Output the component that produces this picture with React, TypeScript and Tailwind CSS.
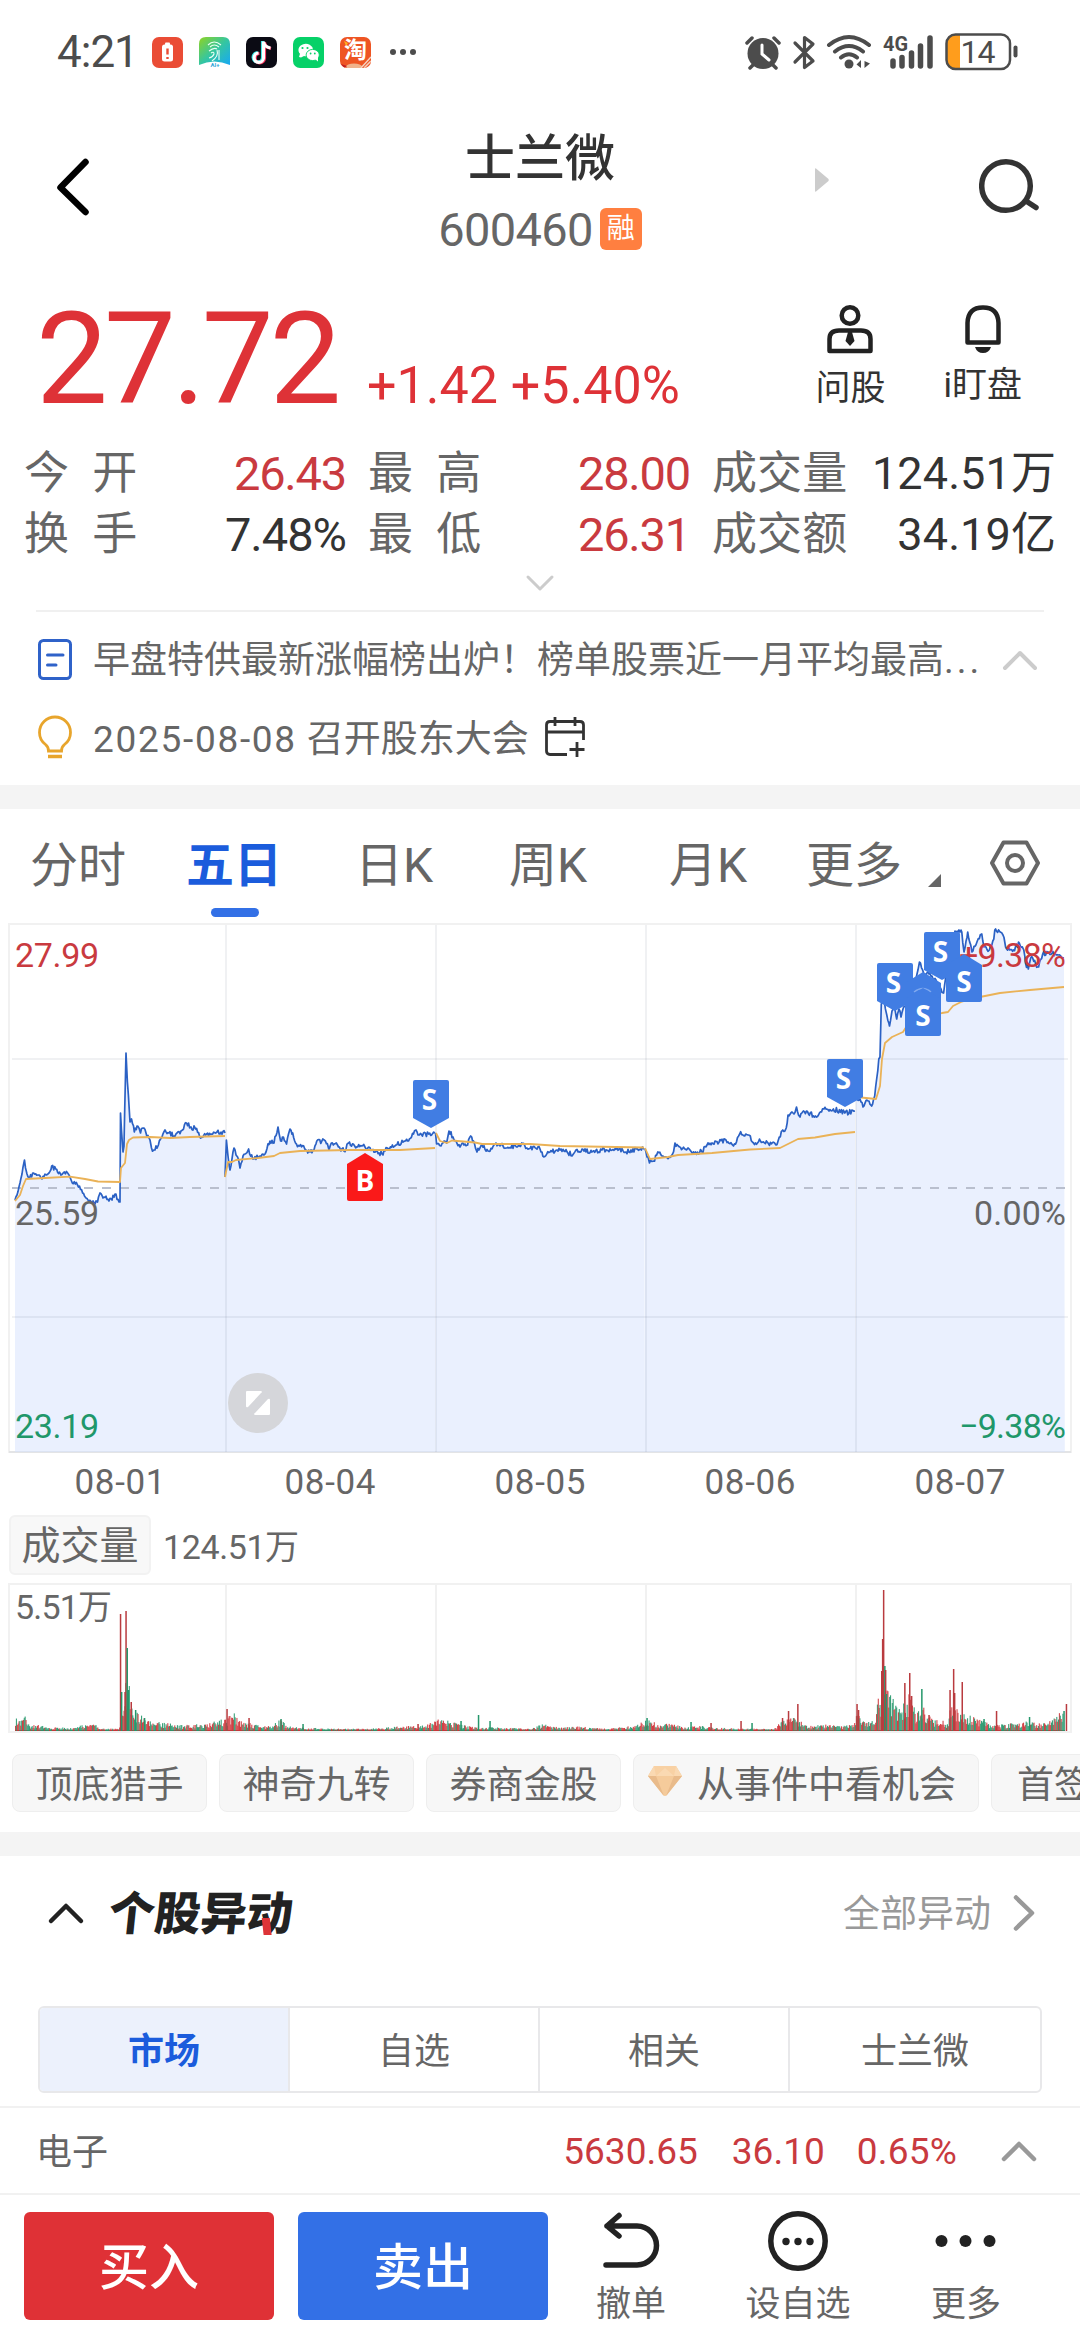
import type { ReactNode } from "react";

type Point = [number, number];

// Anchor points of the price line, one list per trading day.
const priceDays: Point[][] = [
  [
    [15, 1201], [17, 1196], [20, 1184], [22, 1175], [24.5, 1161], [27, 1175], [29.6, 1179], [32.7, 1174], [38, 1176],
    [42, 1180], [46.5, 1176], [49, 1174], [51.7, 1167], [55.8, 1170], [57.5, 1173], [61, 1176], [64.4, 1173],
    [69, 1176], [72.3, 1184], [77.5, 1186], [82.6, 1194], [86, 1199], [93, 1202], [97.5, 1203], [100, 1194],
    [104, 1198], [109, 1202], [115, 1195], [120, 1203], [120.5, 1114], [123, 1153], [124, 1147], [124.6, 1116],
    [126, 1054], [127.4, 1083], [130, 1123], [131.5, 1120], [134.3, 1133], [137, 1127], [140.5, 1134], [143, 1129],
    [146, 1134], [150, 1141], [151.5, 1149], [154, 1151], [158.4, 1146], [162, 1138], [165, 1131], [169, 1134],
    [174, 1137], [177, 1134], [182.5, 1131], [186.6, 1124], [191, 1128], [195.6, 1130], [199.7, 1138],
    [206.6, 1135], [217, 1133], [225, 1134],
  ],
  [
    [225, 1178], [226.4, 1141], [228, 1157], [230, 1171], [234, 1149], [237.6, 1158], [240, 1169], [243, 1157],
    [245, 1155], [248.6, 1150], [250.7, 1157], [254, 1160], [260, 1157], [265, 1155], [270, 1142], [274, 1144],
    [278, 1128], [280.6, 1142], [282.4, 1138], [286.5, 1145], [290, 1130], [292.7, 1134], [295.5, 1144],
    [299.6, 1147], [304.8, 1150], [310, 1153], [314, 1151], [316.8, 1142], [325.4, 1142], [329, 1151],
    [331.3, 1144], [337.5, 1146], [341, 1152], [346, 1150], [348.5, 1144], [354.7, 1147], [365, 1148], [372, 1151],
    [379, 1154], [382, 1155], [387.4, 1149], [396, 1146], [404.6, 1142], [411.5, 1138], [416, 1131], [419.4, 1136],
    [428.7, 1135], [435, 1134],
  ],
  [
    [435.5, 1134], [436.6, 1145], [441, 1147], [444, 1142], [446.6, 1144], [449, 1132], [453, 1138], [456, 1142],
    [460, 1148], [465, 1145], [467.6, 1146], [470.7, 1137], [473.5, 1142], [477, 1153], [482, 1146], [488, 1152],
    [496, 1144], [503, 1147], [516.5, 1148], [521.7, 1144], [527, 1149], [540, 1150], [542.8, 1157], [550, 1153],
    [557, 1151], [564, 1152], [572.7, 1156], [576, 1151], [591.7, 1153], [602, 1151], [619, 1150], [626, 1153],
    [636.4, 1150], [644.3, 1150],
  ],
  [
    [645, 1150], [646, 1153], [649.5, 1164], [653.6, 1162], [657.8, 1153], [662, 1157], [669, 1158], [672.6, 1155],
    [675, 1144], [679.5, 1148], [688, 1149], [691.5, 1153], [702, 1153], [707, 1146], [712, 1144], [726, 1141],
    [733.5, 1147], [739.7, 1135], [748.3, 1136], [753.5, 1144], [760.4, 1142], [776, 1146], [779.3, 1138],
    [782.8, 1131], [786.2, 1129], [788, 1116], [794, 1115], [796.5, 1108], [800, 1118], [803.4, 1112],
    [815.5, 1117], [824, 1110], [829, 1112], [833.4, 1110], [844.8, 1114], [855, 1112],
  ],
  [
    [856, 1099], [860, 1100], [863, 1108], [867, 1101], [871.6, 1107], [874.7, 1097], [876.8, 1079], [878.8, 1060],
    [880, 1058], [881.3, 1005], [884.4, 1003], [886.8, 1016], [889.5, 1027], [892, 1012], [894, 1005], [896.7, 1020],
    [899, 1010], [901, 1018], [903.3, 1009], [912, 994], [917, 975], [919.5, 963], [924, 975], [929, 975], [936, 981],
    [943.6, 994], [945.6, 979], [949.8, 957], [955, 932], [961.8, 933], [964, 953], [967.7, 933], [972, 953],
    [977.3, 942], [981.8, 935], [984, 948], [989.4, 951], [992.8, 942], [995.6, 930], [1003, 936], [1005.6, 948],
    [1013.5, 951], [1019.3, 944], [1023.8, 951], [1025.5, 964], [1028.3, 970], [1030.7, 959], [1038.6, 968],
    [1042.7, 955], [1048, 953], [1056.5, 956], [1064, 959],
  ],
];

const averageDays = [
  "15,1202 20,1196 23,1187 26,1180 45,1179 70,1177.6 85,1180 98,1182.5 120,1183 121,1169 125,1164 127,1145 129,1141 133,1138.5 150,1138 170,1139 190,1138 225,1137",
  "225,1178 228,1163 232,1163 236,1161 258,1159 274,1157 280,1154 300,1152 350,1151 400,1151 435,1149",
  "436,1134 440,1142 447,1144 452,1141.5 475,1143.5 482,1145 530,1145 560,1147 644,1148.5",
  "645,1149 650,1160 668,1158 678,1156 712,1154 750,1150.5 780,1149 788,1145 798,1140 815,1138.5 835,1135 855,1133",
  "861,1098.5 876,1100 880,1087 882,1060 885,1044 892,1038 903,1033 910,1022 925,1016 942,1014 948,1013 953,1007 961,1003 975,999 1000,994 1030,991 1064,988",
];

// Upper bound of ordinary volume along the time axis.
const volumeEnvelope: Point[] = [
  [15, 11], [20, 8], [24, 13], [30, 5], [42, 5], [52, 3], [70, 3], [80, 5], [93, 6], [102, 2], [119, 2], [120, 16],
  [127, 48], [132, 26], [140, 14], [150, 9], [165, 7], [180, 5], [205, 6], [222, 10], [226, 12], [231, 17],
  [240, 10], [254, 6], [270, 4], [280, 11], [286, 4], [304, 3], [330, 2], [370, 2], [400, 4], [425, 5], [437, 10],
  [446, 9], [460, 6], [470, 4], [500, 3], [530, 2], [542, 6], [560, 3], [580, 4], [605, 2], [635, 5], [645, 9],
  [648, 10], [658, 6], [676, 6], [684, 3], [700, 5], [712, 3], [740, 2], [774, 2], [780, 8], [790, 12], [799, 10],
  [808, 4], [825, 6], [840, 4], [853, 7], [857, 16], [862, 10], [870, 7], [875, 12], [878, 30], [886, 36],
  [893, 30], [901, 20], [908, 33], [911, 30], [916, 12], [921, 28], [925, 14], [934, 10], [943, 9], [946, 4],
  [950, 22], [955, 22], [960, 15], [970, 13], [980, 10], [990, 6], [1001, 6], [1020, 7], [1030, 9], [1040, 6],
  [1050, 9], [1060, 16], [1064, 18],
];

// Single minutes that stand out: x, height, rising?
const volumeSpikes: [number, number, boolean][] = [
  [120.5, 117, true], [121.6, 39, false], [125, 39, true], [126, 120, true], [127.2, 83, false], [128.4, 41, false],
  [131.2, 29, true], [135.6, 21, false], [144.5, 13, false], [227, 22, true], [249, 13, true], [281, 12, false],
  [303, 7, false], [418, 7, true], [461, 10, false], [478.5, 16, false], [490, 10, false], [647, 13, false],
  [691, 9, false], [711, 8, true], [741, 10, true], [752, 8, false], [782.5, 13, true], [788.5, 20, true],
  [797.8, 27, true], [857, 27, true], [858.5, 21, true], [881.7, 60, true], [882.6, 92, true], [883.6, 141, true],
  [884.8, 65, false], [885.6, 61, true], [886.5, 37, false], [904.8, 48, true], [909.7, 58, true], [911.6, 35, true],
  [921.8, 42, false], [929, 16, true], [950, 41, true], [953.6, 62, true], [954.6, 38, true], [962.2, 49, true],
  [984, 12, false], [996.5, 20, true], [1029.5, 14, false], [1064, 20, false], [1066.4, 27, true],
];

const noise = (seed: number) => {
  const v = Math.sin(seed * 127.1 + 11.7) * 43758.5453;
  return v - Math.floor(v);
};

const interpolate = (points: Point[], x: number) => {
  const next = points.findIndex((p) => p[0] >= x);
  if (next <= 0) return points[0][1];
  const [x0, y0] = points[next - 1];
  const [x1, y1] = points[next];
  return y0 + ((y1 - y0) * (x - x0)) / (x1 - x0);
};

const roughen = (points: Point[]) => {
  const result: Point[] = [];
  points.forEach(([x, y], i) => {
    result.push([x, y]);
    const after = points[i + 1];
    if (!after) return;
    for (let px = x + 1; px < after[0] - 0.6; px += 1) {
      const jitter = (noise(px) - 0.5) * 5;
      result.push([px, interpolate([[x, y], after], px) + jitter]);
    }
  });
  return result;
};

const toPoints = (points: Point[]) => points.map(([x, y]) => `${x.toFixed(1)},${y.toFixed(1)}`).join(" ");

const priceLines = priceDays.map(roughen);

const bars = Array.from({ length: 1198 }, (_, i) => {
  const x = 15 + i * 0.875;
  const h = Math.max(1.5, interpolate(volumeEnvelope, x) * (0.4 + 0.8 * noise(i + 3)));
  return { x, h, up: noise(Math.floor(i / 4) + i * 0.31) > 0.48 };
});

const gridX = [226, 436, 646, 856];

const Chevron = ({ d, className }: { d: string; className: string }) => (
  <svg viewBox="0 0 40 40" fill="none" stroke="currentColor" strokeLinecap="round" strokeLinejoin="round" className={className}>
    <path d={d} />
  </svg>
);

const UP = "M5 28 L20 13 L35 28";

const Marker = ({ x, y, up, label }: { x: number; y: number; up?: boolean; label?: string }) => (
  <g transform={`translate(${x} ${y})`}>
    <path
      d={up ? "M0 11 L18 0 L36 11 V46 Q36 48 34 48 H2 Q0 48 0 46Z" : "M2 0 H34 Q36 0 36 2 V38 L18 48 L0 38 V2 Q0 0 2 0Z"}
      fill={label === "B" ? "#fa1919" : "#417de3"}
    />
    {label && (
      <text x={up ? 18 : 16.5} y={up ? 38 : 30} textAnchor="middle" fill="#fff" fontSize="28" className="font-['Open_Sans'] font-bold">
        {label}
      </text>
    )}
  </g>
);

const StatusBar = () => (
  <div className="flex h-[104px] items-center pl-[57px] pr-[60px] text-[#4c4c4c]">
    <span className="w-[95px] text-[44px] leading-none tracking-[-1px]">4:21</span>
    <div className="flex items-center gap-4">
      <svg viewBox="0 0 31 31" className="size-[31px]">
        <rect width="31" height="31" rx="7" fill="#ea4c35" />
        <rect x="10" y="7.500" width="11" height="17" rx="2.500" fill="#fff" />
        <rect x="13" y="5.500" width="5" height="3" rx="1" fill="#fff" />
        <path d="M15.500 11.500v6M15.500 20v2" stroke="#ea4c35" strokeWidth="2.400" />
      </svg>
      <svg viewBox="0 0 31 31" className="size-[31px]">
        <defs>
          <linearGradient id="home" x1="0" y1="0" x2="1" y2="1">
            <stop offset="0" stopColor="#8fd322" />
            <stop offset="0.5" stopColor="#35c6a0" />
            <stop offset="1" stopColor="#17a8f5" />
          </linearGradient>
        </defs>
        <path d="M7 0H24Q31 0 31 7V28Q15 21 0 28V7Q0 0 7 0Z" fill="url(#home)" />
        <g fill="none" stroke="#e9fff4" strokeWidth="1.100">
          <path d="M9 8Q15 2 22 8M11 10Q15 6 20 10M10 14Q15 10 18 12M18 13Q20 19 13 24M12 16Q15 14 15 17Q14 20 10 21M20 13V23" />
        </g>
        <text x="16" y="30" textAnchor="middle" fontSize="6" fill="#31a6d8" className="font-bold">AI+</text>
      </svg>
      <svg viewBox="0 0 31 31" className="size-[31px]">
        <rect width="31" height="31" rx="7" fill="#0b0b14" />
        <g fill="none" strokeWidth="3.200">
          <path d="M16.500 4V20.500A4.700 4.700 0 1 1 11.500 15.500M16.500 4.500Q17.500 9.500 23.500 10.500" stroke="#35e6e6" />
          <path d="M18.500 5V21.500A4.700 4.700 0 1 1 13.500 16.500M18.500 5.500Q19.500 10.500 25 11.500" stroke="#f5305a" />
          <path d="M17.500 4.500V21A4.700 4.700 0 1 1 12.500 16M17.500 5Q18.500 10 24.500 11" stroke="#fff" />
        </g>
      </svg>
      <svg viewBox="0 0 31 31" className="size-[31px]">
        <rect width="31" height="31" rx="7" fill="#06d168" />
        <path d="M6 20L7 16.800A7.300 6.200 0 1 1 11 19L8 20.500Z" fill="#fff" />
        <ellipse cx="19.700" cy="18" rx="6.600" ry="5.600" fill="#fff" stroke="#06d168" strokeWidth="0.900" />
        <path d="M22 22L25 24.500L25 20Z" fill="#fff" />
        <g fill="#06d168">
          <circle cx="9.500" cy="11" r="1.100" />
          <circle cx="14.500" cy="11" r="1.100" />
          <circle cx="17.600" cy="16.500" r="0.900" />
          <circle cx="21.800" cy="16.500" r="0.900" />
        </g>
      </svg>
      <div className="relative flex size-[31px] items-center justify-center overflow-hidden rounded-[7px] bg-[#ee5523]">
        <span className="pb-1 text-[23px] font-bold leading-none text-white">淘</span>
        <svg viewBox="0 0 31 31" className="absolute inset-0">
          <path d="M4 4L8 6L6 9Z" fill="#ffb020" />
          <ellipse cx="14" cy="29.500" rx="8" ry="3" fill="#f0b38c" />
          <path d="M1 27L7 29L4 31Z" fill="#c02020" />
          <path d="M21 31L31 20M24 31L31 24" stroke="#f6d2c0" strokeWidth="1.500" />
        </svg>
      </div>
    </div>
    <div className="ml-[19px] flex gap-1">
      <i className="size-1.5 rounded-full bg-[#4c4c4c]" />
      <i className="size-1.5 rounded-full bg-[#4c4c4c]" />
      <i className="size-1.5 rounded-full bg-[#4c4c4c]" />
    </div>
    <svg viewBox="744 32 276 38" className="ml-auto h-[38px] w-[276px]" fill="none" stroke="#4c4c4c">
      <circle cx="763" cy="52.500" r="15.500" fill="#4c4c4c" stroke="none" />
      <path d="M762 44V53L769 59" stroke="#fff" strokeWidth="3" strokeLinecap="round" />
      <path d="M747 42L752 37M774 37L779 42M754 63L750 67M772 63L776 67" strokeWidth="3.500" strokeLinecap="round" />
      <path d="M795 42L813 60L804.500 66.500V36.500L813 43L795 61" strokeWidth="3.200" strokeLinecap="round" strokeLinejoin="round" />
      <path d="M829 44Q849 28 869 44M835 50.500Q849 39.500 863 50.500M841 56.500Q849 50 857 56.500" strokeWidth="4" strokeLinecap="round" />
      <circle cx="849" cy="63" r="4.500" fill="#4c4c4c" stroke="none" />
      <path d="M861 59V67L856.500 63.500ZM864.500 59V67M864.500 67V60L870 62.500Z" fill="#4c4c4c" stroke="none" />
      <text x="883" y="49.500" fontSize="20" fill="#4c4c4c" stroke="none" textLength="25" lengthAdjust="spacingAndGlyphs" className="font-bold">4G</text>
      <path d="M893 60V65M902 56.500V65M911.500 52V65M920.500 45V65M930 37V65" strokeWidth="5.500" strokeLinecap="round" />
      <path d="M953 34H960V68H953Q947 68 947 60V42Q947 34 953 34Z" fill="#ff9d1c" stroke="none" />
      <rect x="946.500" y="33.500" width="63.500" height="34.500" rx="9" strokeWidth="2.500" />
      <path d="M1015.500 46.500V54.500" strokeWidth="4" strokeLinecap="round" />
      <text x="960.500" y="61.500" fontSize="32" fill="#4c4c4c" stroke="none" textLength="35">14</text>
    </svg>
  </div>
);

const Header = () => (
  <div className="grid h-[166px] grid-cols-[1fr_auto_1fr]">
    <svg viewBox="0 0 32 58" className="ml-[57px] mt-[54px] h-[58px] w-8" fill="none" stroke="#000" strokeWidth="6.500" strokeLinecap="round" strokeLinejoin="round">
      <path d="M28.500 4L3.500 29.500L28.500 54" />
    </svg>
    <div className="flex flex-col items-center pt-[29px]">
      <h1 className="text-[50px] font-medium leading-[52px] text-[#333]">士兰微</h1>
      <div className="mt-[19px] flex items-center gap-[7px]">
        <span className="pt-0.5 text-[47px] leading-[48px] tracking-[-0.700px] text-[#666]">600460</span>
        <span className="flex size-[42px] items-center justify-center rounded-md bg-[#ff7f40] text-[28px] leading-none text-white">融</span>
      </div>
    </div>
    <div className="flex justify-between pl-[173px] pr-[40px]">
      <svg viewBox="0 0 14 24" className="mt-16 h-6 w-3.5">
        <path d="M0 1Q0 0 1 0.500L13.500 11Q14 12 13.500 13L1 23.500Q0 24 0 23Z" fill="#ccc" />
      </svg>
      <svg viewBox="0 0 61 56" className="mt-[54px] h-14 w-[61px]" fill="none" stroke="#333" strokeWidth="5.500" strokeLinecap="round">
        <circle cx="27" cy="28" r="24.300" />
        <path d="M47 43L57 49.500" />
      </svg>
    </div>
  </div>
);

const Price = () => (
  <div className="flex h-[171px] pl-[36px] pr-[58px] text-[#de3237]">
    <div className="flex flex-1 items-baseline">
      <span className="w-[331px] text-[128px] leading-[178px] tracking-[-4px]">27.72</span>
      <span className="text-[52px]">+1.42 +5.40%</span>
    </div>
    <div className="flex gap-[58px] pt-[34px] text-[35px] leading-none text-[#333]">
      <div className="flex flex-col items-center">
        <svg viewBox="0 0 46 50" className="h-[50px] w-[46px]" fill="none" stroke="#222" strokeWidth="4.500" strokeLinejoin="round">
          <circle cx="23" cy="11.500" r="8.300" />
          <path d="M2.500 47V35Q2.500 26.500 12 26.500H34Q43.500 26.500 43.500 35V47Z" />
          <path d="M21 28H25L27.500 37L23 42L18.500 37Z" fill="#222" stroke="none" />
        </svg>
        <span className="mt-[17px]">问股</span>
      </div>
      <div className="flex flex-col items-center">
        <svg viewBox="0 0 38 50" className="h-[50px] w-[38px]" fill="none" stroke="#222" strokeWidth="4.500" strokeLinejoin="round">
          <path d="M3.500 38.500V19Q4 3.500 19 3.500Q34 3.500 34.500 19V38.500Z" />
          <path d="M11 43H27Q25 49 19 49Q13 49 11 43Z" fill="#222" stroke="none" />
        </svg>
        <span className="mt-[14px]">i盯盘</span>
      </div>
    </div>
  </div>
);

const Stat = ({ label, value, tone }: { label: string; value: string; tone: string }) => (
  <div className="flex items-center justify-between pt-[3px]">
    <span className="whitespace-pre text-[#666]">{label}</span>
    <span className={tone}>{value}</span>
  </div>
);

const Stats = () => (
  <div className="grid grid-cols-[322px_322px_344px] grid-rows-[61px_61px] gap-x-[22px] pl-6 text-[45px] leading-none tracking-[0.100px]">
    <Stat label={"今\u2002开"} value="26.43" tone="text-[47px] tracking-[-1.200px] text-[#c93a3f]" />
    <Stat label={"最\u2002高"} value="28.00" tone="text-[47px] tracking-[-1.200px] text-[#c93a3f]" />
    <Stat label="成交量" value="124.51万" tone="text-[#333]" />
    <Stat label={"换\u2002手"} value="7.48%" tone="text-[47px] tracking-[-1px] text-[#333]" />
    <Stat label={"最\u2002低"} value="26.31" tone="text-[47px] tracking-[-1.200px] text-[#c93a3f]" />
    <Stat label="成交额" value="34.19亿" tone="text-[#333]" />
  </div>
);

const News = () => (
  <div className="mx-9 h-[175px] border-t-2 border-[#f0f0f0] text-[37px] leading-none text-[#666]">
    <div className="mt-[22px] flex h-[52px] items-center">
      <svg viewBox="0 0 38 44" className="h-11 w-[38px]" fill="none" stroke="#2f62c9" strokeWidth="3" strokeLinecap="round">
        <rect x="3.500" y="2.500" width="31" height="38" rx="4" />
        <path d="M11.500 17H27M11.500 27H20" />
      </svg>
      <span className="ml-[19px] w-[891px] whitespace-nowrap">
        早盘特供最新涨幅榜出炉！榜单股票近一月平均最高<span className="tracking-[3px]">...</span>
      </span>
      <Chevron d={UP} className="ml-4 size-10 stroke-[4] text-[#ccc]" />
    </div>
    <div className="mt-[27px] flex h-[52px] items-center">
      <svg viewBox="0 0 38 44" className="-mt-1 h-11 w-[38px]" fill="none" stroke="#e8a52c" strokeWidth="2.800">
        <path d="M12.500 36Q12.500 32 9.500 29.500Q3.500 25 3.500 17.500A15.500 15.500 0 0 1 34.500 17.500Q34.500 25 28.500 29.500Q25.500 32 25.500 36Z" />
        <path d="M12 41.500H26" strokeWidth="3.500" />
      </svg>
      <span className="ml-[19px] tracking-[1.700px]">2025-08-08</span>
      <span className="ml-2.5">召开股东大会</span>
      <svg viewBox="0 0 42 42" className="-mt-1 ml-[15px] size-[42px]" fill="none" stroke="#333" strokeWidth="2.800">
        <path d="M23 38.500H6Q2.500 38.500 2.500 35V9Q2.500 5.500 6 5.500H36Q39.500 5.500 39.500 9V24M2.500 16H39.500M11 1V10M31 1V10M33 26V41M25.500 33.500H40.500" />
      </svg>
    </div>
  </div>
);

const Tabs = () => (
  <div className="flex h-[114px] pl-[30px] text-[48px] leading-[114px] text-[#666]">
    <span className="w-[156px]">分时</span>
    <div className="flex w-[169px] flex-col items-start">
      <span className="h-[99px] font-bold text-[#1b5cdc]">五日</span>
      <i className="ml-[25px] h-[9px] w-12 rounded-full bg-[#3370e6]" />
    </div>
    <span className="w-[154px]">日K</span>
    <span className="w-[160px]">周K</span>
    <span className="w-[137px]">月K</span>
    <span className="w-[122px]">更多</span>
    <svg viewBox="0 0 13 13" className="mt-[65px] size-[13px]">
      <path d="M13 0V13H0Z" fill="#666" />
    </svg>
    <svg viewBox="0 0 52 46" className="ml-[48px] mt-[31px] h-[46px] w-[52px]" fill="none" stroke="#666" strokeWidth="4">
      <path d="M14.500 2.500H37.500L49 23L37.500 43.500H14.500L3 23Z" strokeLinejoin="round" />
      <circle cx="26" cy="23" r="8" />
    </svg>
  </div>
);

const PriceChart = () => (
  <svg viewBox="8 924 1064 580" className="ml-2 block h-[580px] w-[1064px]" fontSize="34">
    <rect x="9" y="925" width="1062" height="528" fill="none" stroke="#f1f1f1" strokeWidth="2" />
    {priceLines.map((line, i) => (
      <polygon key={i} points={`${line[0][0]},1453 ${toPoints(line)} ${i < 4 ? priceLines[i + 1][0][0] : 1064.800},1453`} fill="#eaf0fe" />
    ))}
    <g stroke="#5a6478" strokeOpacity="0.090" strokeWidth="2">
      {gridX.map((x) => (
        <path key={x} d={`M${x} 926V1453`} />
      ))}
      <path d="M12 1060H1068M12 1318H1068M9 1453H1071" />
    </g>
    <path d="M12 1189H1065" stroke="#b9bfce" strokeWidth="2" strokeDasharray="9 9" />
    <g fill="none" strokeLinejoin="round">
      {priceLines.map((line, i) => (
        <polyline key={i} points={toPoints(line)} stroke="#2b61c4" strokeWidth="1.700" />
      ))}
      {averageDays.map((points) => (
        <polyline key={points} points={points} stroke="#eab257" strokeWidth="1.800" />
      ))}
    </g>
    <text x="15" y="968" fill="#c93a3f" textLength="84">27.99</text>
    <text x="15" y="1226" fill="#666" textLength="84">25.59</text>
    <text x="15" y="1439" fill="#20976a" textLength="84">23.19</text>
    <g textAnchor="end">
      <text x="1066" y="968" fill="#c93a3f" textLength="107">+9.38%</text>
      <text x="1066" y="1226" fill="#666" textLength="92">0.00%</text>
      <text x="1066" y="1439" fill="#20976a" textLength="107">−9.38%</text>
    </g>
    <Marker x={413} y={1081} label="S" />
    <Marker x={347} y={1154} up label="B" />
    <Marker x={827} y={1060} label="S" />
    <Marker x={877} y={964} label="S" />
    <Marker x={905} y={973} up />
    <path d="M914 993Q923 986 931 993" fill="none" stroke="#7fa8ee" strokeWidth="1.500" />
    <Marker x={905} y={989} up label="S" />
    <Marker x={924} y={933} label="S" />
    <Marker x={946} y={955} up label="S" />
    <circle cx="258" cy="1404" r="30" fill="#d5d6da" />
    <path d="M247 1392H261Q263 1393 261 1394L248 1408Q246 1409 246 1407V1393Q246 1392 247 1392Z" fill="#fff" />
    <path d="M269 1416H255Q253 1415 255 1414L268 1400Q270 1399 270 1401V1415Q270 1416 269 1416Z" fill="#fff" />
    <g fill="#666" fontSize="35" textAnchor="middle">
      {["01", "04", "05", "06", "07"].map((day, i) => (
        <text key={day} x={120 + i * 210} y="1495" textLength="91">{`08-${day}`}</text>
      ))}
    </g>
  </svg>
);

const VolumeChart = () => (
  <svg viewBox="8 1584 1064 150" className="ml-2 block h-[150px] w-[1064px]">
    <rect x="9" y="1585" width="1062" height="148" fill="none" stroke="#f1f1f1" strokeWidth="2" />
    {gridX.map((x) => (
      <path key={x} d={`M${x} 1586V1732`} stroke="#f1f1f1" strokeWidth="2" />
    ))}
    <path d="M15 1731.500H1065" stroke="#8d5a50" strokeWidth="1" />
    {bars.map((bar, i) => (
      <rect key={i} x={bar.x} y={1732 - bar.h} width="1.100" height={bar.h} fill={bar.up ? "#cf3237" : "#25976b"} fillOpacity="0.900" />
    ))}
    {volumeSpikes.map(([x, h, up]) => (
      <rect key={x} x={x - 0.700} y={1732 - h} width="1.500" height={h} fill={up ? "#b93b3f" : "#25976b"} />
    ))}
    <text x="15" y="1620" fontSize="34" fill="#666" textLength="97">5.51万</text>
  </svg>
);

const Chip = ({ children, className }: { children: ReactNode; className: string }) => (
  <div className={`flex h-[58px] shrink-0 items-center rounded-lg border border-[#eee] bg-[#f7f7f7] pt-1 ${className}`}>{children}</div>
);

const Chips = () => (
  <div className="mt-[21px] flex gap-3 overflow-hidden pl-3 text-[37px] leading-none text-[#666]">
    <Chip className="w-[195px] justify-center">顶底猎手</Chip>
    <Chip className="w-[195px] justify-center">神奇九转</Chip>
    <Chip className="w-[195px] justify-center">券商金股</Chip>
    <Chip className="w-[346px] gap-[15px] pl-[14px]">
      <svg viewBox="0 0 34 32" className="mb-2 h-8 w-[34px] shrink-0">
        <path d="M6 1H28L34 11L19 30Q17 32 15 30L0 11Z" fill="#f5cb9b" />
        <path d="M6 1H28L34 11H0Z" fill="#fad9b2" />
        <path d="M0 11H8L16 31ZM34 11H26L18 31Z" fill="#e9bb8b" />
        <path d="M6 1L8 11L17 3L26 11L28 1Z" fill="#f8d1a4" />
      </svg>
      <span className="whitespace-nowrap">从事件中看机会</span>
    </Chip>
    <Chip className="px-[25px]">首签</Chip>
  </div>
);

const segments = ["市场", "自选", "相关", "士兰微"];

const Movements = () => (
  <div>
    <div className="flex h-[114px] items-center pl-[46px] pr-[37px]">
      <Chevron d={UP} className="size-10 stroke-[4.500] text-[#222]" />
      <h2 className="relative ml-[23px] mt-0.5 -skew-x-6 text-[46px] font-black leading-none text-[#222]">
        个股异动
        <i className="absolute bottom-0.5 left-[155px] h-[17px] w-2 skew-x-12 bg-[#dd3438]" />
      </h2>
      <span className="ml-auto mt-[3px] text-[37px] leading-none text-[#999]">全部异动</span>
      <Chevron d="M13 4.500L29 20L13 35.500" className="ml-3 size-10 stroke-[4.500] text-[#999]" />
    </div>
    <div className="mx-[38px] mt-9 grid h-[87px] grid-cols-4 divide-x-2 divide-[#e8e8ea] overflow-hidden rounded-md border-2 border-[#e8e8ea] text-[36px] leading-none text-[#666]">
      {segments.map((name, i) => (
        <div key={name} className={`flex items-center justify-center pt-1 ${i === 0 ? "bg-[#ecf1fc] font-bold text-[#1b5cdc]" : ""}`}>
          {name}
        </div>
      ))}
    </div>
  </div>
);

const IndexRow = () => (
  <div className="mt-[13px] flex h-[89px] items-center border-y-2 border-[#f1f1f1] pl-9 pr-[41px] text-[37px] leading-none text-[#c93a3f]">
    <span className="flex-1 pt-1 text-[36px] text-[#666]">电子</span>
    <span className="pt-0.5">5630.65</span>
    <span className="ml-[34px] pt-0.5">36.10</span>
    <span className="ml-8 pt-0.5 tracking-[0.200px]">0.65%</span>
    <Chevron d={UP} className="ml-[42px] size-10 stroke-[4.500] text-[#999]" />
  </div>
);

const Action = ({ label, className, children }: { label: string; className: string; children: ReactNode }) => (
  <div className={`flex flex-col items-center ${className}`}>
    <svg viewBox="0 0 64 64" className="size-16" fill="none" stroke="#222" strokeWidth="5.500" strokeLinecap="round" strokeLinejoin="round">
      {children}
    </svg>
    <span className="mt-4 whitespace-nowrap">{label}</span>
  </div>
);

const BottomBar = () => (
  <div className="flex h-[143px] pl-6 pt-[17px] text-[35px] leading-none text-[#666]">
    <button className="h-[108px] w-[250px] rounded-md bg-[#df3136] pt-1 text-[50px] font-medium text-white">买入</button>
    <button className="ml-6 h-[108px] w-[250px] rounded-md bg-[#3370e6] pt-1 text-[50px] font-medium text-white">卖出</button>
    <Action label="撤单" className="-mt-[5px] ml-[29px] w-[108px]">
      <path d="M20 8.500L8 19L20 29M8 19H38A19.500 19.500 0 0 1 38 58H7" />
    </Action>
    <Action label="设自选" className="-mt-[5px] ml-[59px] w-[108px]">
      <circle cx="32" cy="34" r="27.200" />
      <g fill="#222" stroke="none">
        <circle cx="20" cy="34.500" r="3.700" />
        <circle cx="32" cy="34.500" r="3.700" />
        <circle cx="44" cy="34.500" r="3.700" />
      </g>
    </Action>
    <Action label="更多" className="-mt-[5px] ml-[60px] w-[108px]">
      <g fill="#222" stroke="none">
        <circle cx="7.500" cy="34" r="6" />
        <circle cx="31.500" cy="34" r="6" />
        <circle cx="55.500" cy="34" r="6" />
      </g>
    </Action>
  </div>
);

export default function App() {
  return (
    <div className="h-[2340px] w-[1080px] overflow-hidden bg-white font-[Roboto,'Noto_Sans_CJK_SC',sans-serif]">
      <StatusBar />
      <Header />
      <Price />
      <Stats />
      <div className="flex h-[47px] justify-center">
        <Chevron d="M8 14L20 26L32 14" className="size-10 stroke-[3] text-[#ccc]" />
      </div>
      <News />
      <div className="h-6 bg-[#f4f4f4]" />
      <Tabs />
      <PriceChart />
      <div className="flex h-20 items-center pl-[9px] pt-[4px] text-[#666]">
        <span className="flex h-[60px] w-[142px] items-center justify-center rounded-md border-2 border-[#f2f2f2] bg-[#f8f8f8] pt-[3px] text-[39px] leading-none">
          成交量
        </span>
        <span className="ml-3 pt-[3px] text-[34px] leading-none tracking-[-0.400px]">124.51万</span>
      </div>
      <VolumeChart />
      <Chips />
      <div className="mt-5 h-6 bg-[#f4f4f4]" />
      <Movements />
      <IndexRow />
      <BottomBar />
    </div>
  );
}
